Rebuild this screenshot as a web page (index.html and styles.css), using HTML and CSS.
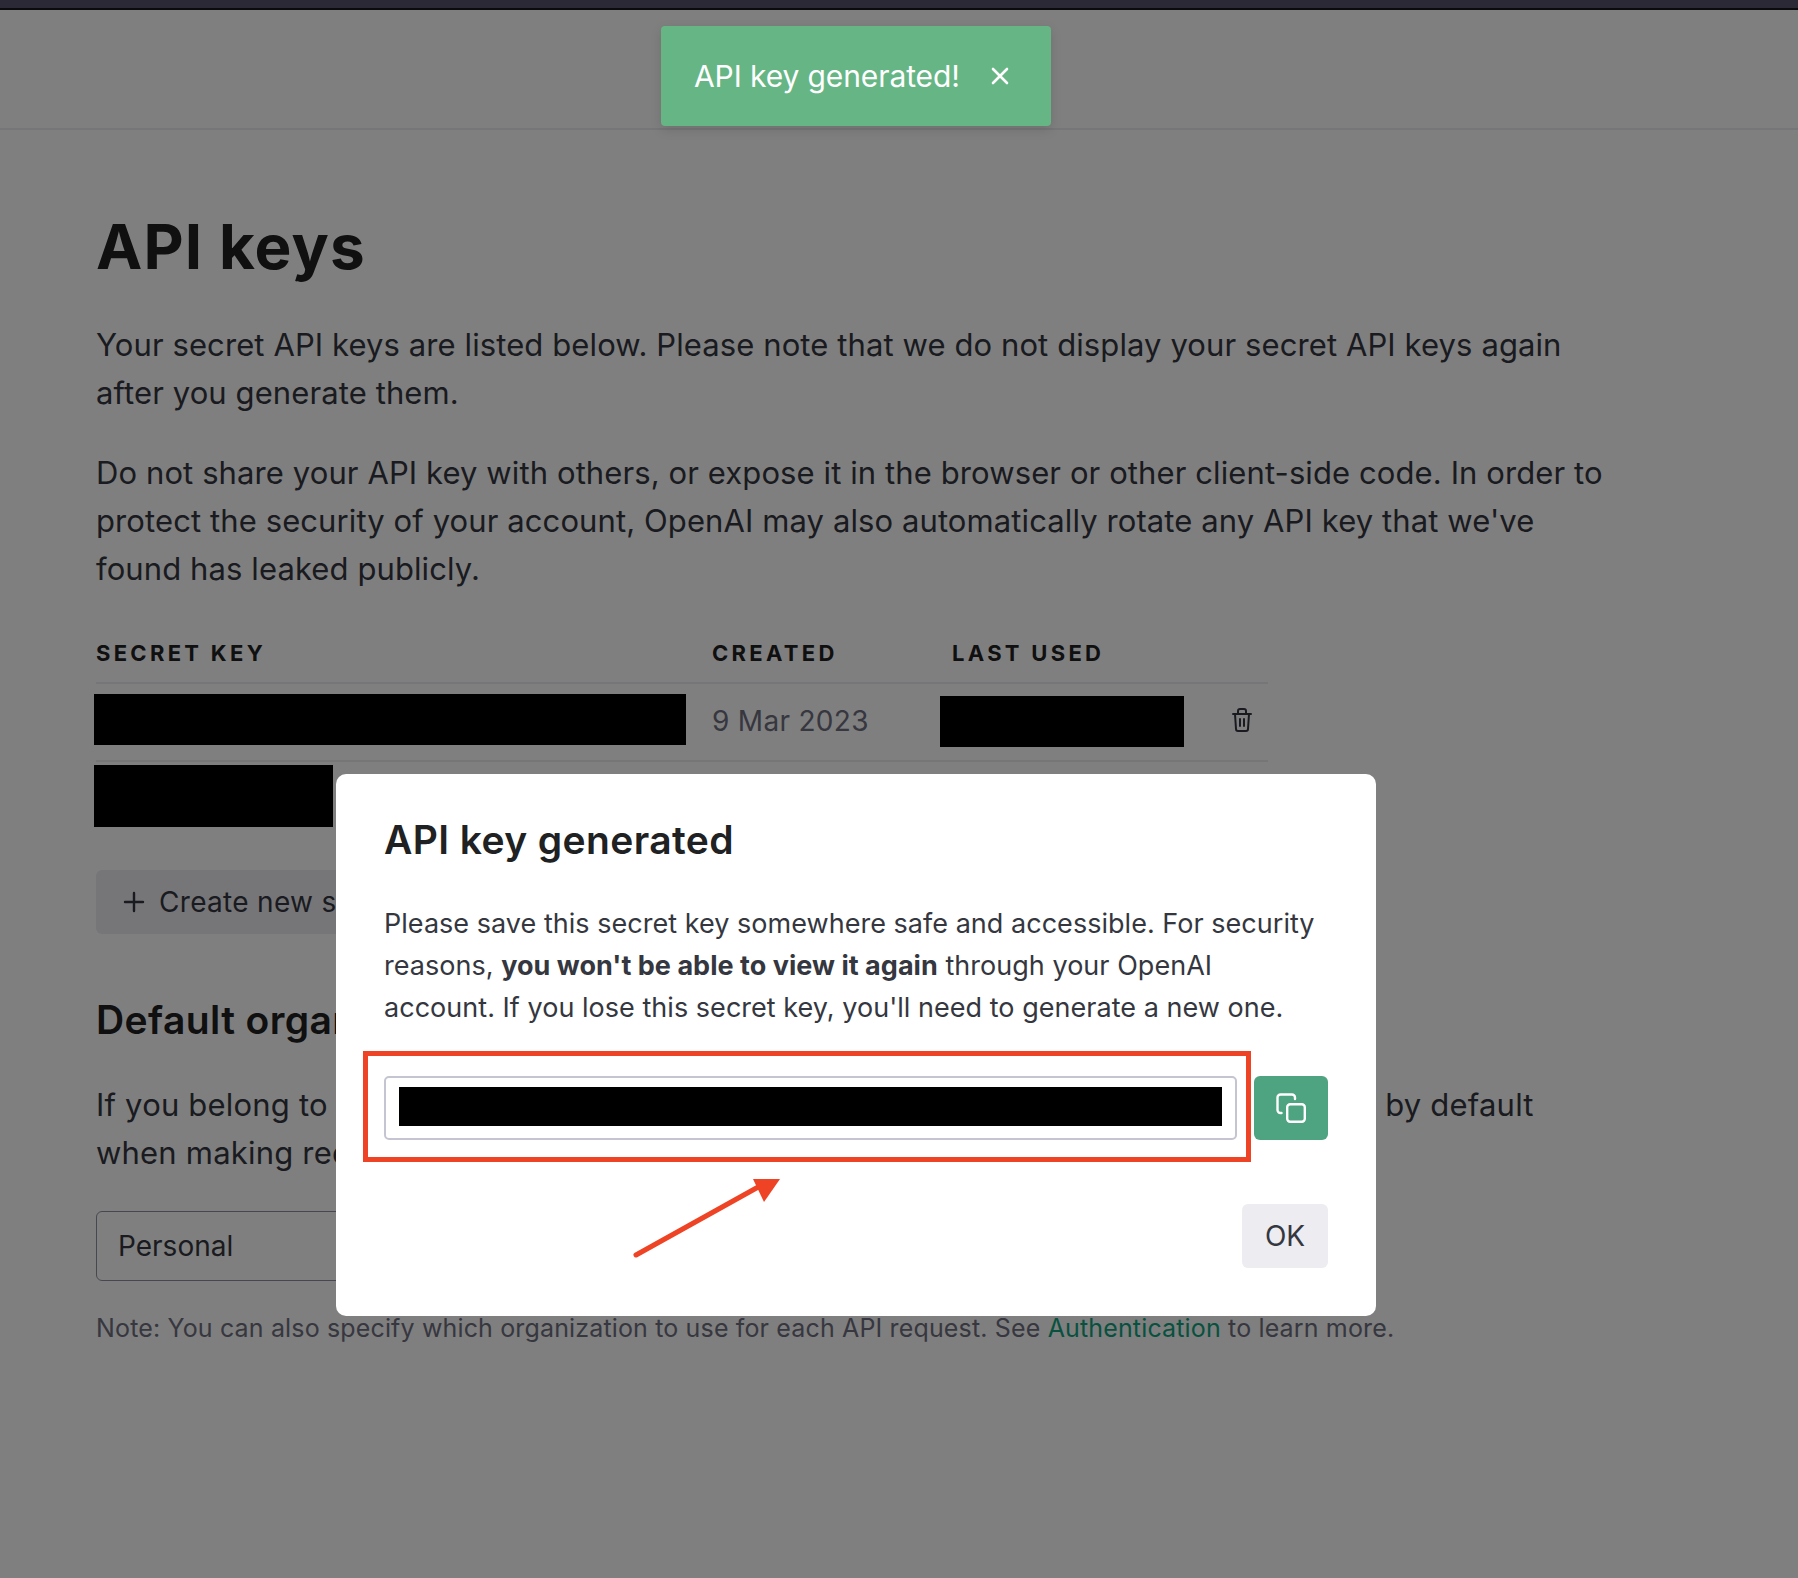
FILE: index.html
```html
<!DOCTYPE html>
<html lang="en">
<head>
  <meta charset="UTF-8">
  <title>API keys</title>
  <link rel="stylesheet" href="styles.css">
</head>
<body>

  <div class="top-bar"></div>
  <div class="page-header"></div>

  <main class="content">
    <h1>API keys</h1>
    <p>Your secret API keys are listed below. Please note that we do not display your secret API keys again after you generate them.</p>
    <p>Do not share your API key with others, or expose it in the browser or other client-side code. In order to protect the security of your account, OpenAI may also automatically rotate any API key that we've found has leaked publicly.</p>

    <div class="keys-table">
      <div class="keys-row keys-head">
        <div>SECRET KEY</div>
        <div>CREATED</div>
        <div>LAST USED</div>
        <div></div>
      </div>
      <div class="keys-row keys-item">
        <div><span class="redact redact-key"></span></div>
        <div class="date">9 Mar 2023</div>
        <div><span class="redact redact-used"></span></div>
        <div class="trash">
          <svg width="20" height="24" viewBox="0 0 20 24" fill="none" stroke="#353740" stroke-width="2" stroke-linecap="round" stroke-linejoin="round">
            <path d="M1 6H19"/>
            <path d="M6 6V3a2 2 0 0 1 2-2h4a2 2 0 0 1 2 2v3"/>
            <path d="M3 6l1 15a2 2 0 0 0 2 2h8a2 2 0 0 0 2-2l1-15"/>
            <path d="M8 11v7M12 11v7"/>
          </svg>
        </div>
      </div>
      <div class="redact redact-more"></div>
    </div>

    <button class="create-btn">
      <svg width="22" height="22" viewBox="0 0 22 22" fill="none" stroke="#353740" stroke-width="2.4" stroke-linecap="round">
        <path d="M11 2V20M2 11H20"/>
      </svg>
      Create new secret key
    </button>

    <h2>Default organization</h2>
    <p class="org-text">If you belong to multiple organizations, this setting controls which organization is used by default when making requests with the API keys above.</p>
    <div class="org-select">Personal</div>
    <p class="note">Note: You can also specify which organization to use for each API request. See <a href="#">Authentication</a> to learn more.</p>
  </main>

  <div class="overlay"></div>

  <div class="toast">
    <span>API key generated!</span>
    <svg width="18" height="18" viewBox="0 0 18 18" fill="none" stroke="#fff" stroke-width="2.6" stroke-linecap="round">
      <path d="M2 2L16 16M16 2L2 16"/>
    </svg>
  </div>

  <div class="modal">
    <h3>API key generated</h3>
    <p>Please save this secret key somewhere safe and accessible. For security reasons, <b>you won't be able to view it again</b> through your OpenAI account. If you lose this secret key, you'll need to generate a new one.</p>
    <div class="key-row">
      <div class="key-input"><span class="redact"></span></div>
      <button class="copy-btn">
        <svg width="30" height="30" viewBox="0 0 30 30" fill="none" stroke="#fff" stroke-width="2.4" stroke-linecap="round" stroke-linejoin="round">
          <rect x="11.2" y="11.2" width="17.6" height="17.6" rx="3"/>
          <path d="M5.5 20H4.5a3 3 0 0 1-3-3V4.5a3 3 0 0 1 3-3H16a3 3 0 0 1 3 3V6"/>
        </svg>
      </button>
      <div class="red-box"></div>
    </div>
    <div class="modal-foot">
      <button class="ok-btn">OK</button>
    </div>
  </div>

  <svg class="arrow" width="160" height="90" viewBox="0 0 160 90">
    <path d="M6 85L130 16" stroke="#ee4324" stroke-width="5" stroke-linecap="round"/>
    <path d="M123 9H150L134 32Z" fill="#ee4324"/>
  </svg>

</body>
</html>
```

FILE: styles.css
```css
body {
  margin: 0;
  height: 1578px;
  position: relative;
  overflow: hidden;
  background: white;
  font-family: Inter, "Noto Sans", sans-serif;
  color: #353740;
  font-size: 31px;
  line-height: 48px;
  letter-spacing: 0.1px;
}
.top-bar {
  height: 8px;
  background: #2a2935;
  border-bottom: 2px solid #0b0b0d;
  position: relative;
  z-index: 3;
}
.page-header {
  height: 118px;
  border-bottom: 2px solid #ececf1;
}
.content {
  padding: 0 96px;
}
h1 {
  margin: 83px 0 40px;
  font-size: 62px;
  line-height: 68px;
  font-weight: 700;
  color: #202123;
  letter-spacing: 1.1px;
}
p {
  margin: 32px 0 0;
  width: 1510px;
}
.keys-table {
  margin-top: 43px;
  width: 1172px;
}
.keys-row {
  display: grid;
  grid-template-columns: 616px 240px 290px 26px;
  border-bottom: 2px solid #ececf1;
}
.keys-head {
  height: 46px;
  font-size: 22px;
  line-height: 34px;
  font-weight: 700;
  letter-spacing: 3.3px;
  color: #202123;
}
.keys-item {
  height: 76px;
  align-items: center;
  font-size: 28px;
  letter-spacing: 0.3px;
}
.date {
  color: #6e6e80;
  margin-bottom: 2px;
}
.redact {
  display: block;
  background: black;
  height: 39px;
}
.redact-key {
  margin: 0 0 6px -2px;
  width: 592px;
  height: 51px;
}
.redact-used {
  margin: 0 0 1px -12px;
  width: 244px;
  height: 51px;
}
.redact-more {
  margin: 3px 0 0 -2px;
  width: 239px;
  height: 62px;
}
.trash {
  display: flex;
  justify-content: flex-end;
  margin: 0 0 4px -40px;
  padding-right: 16px;
}
.create-btn {
  margin-top: 43px;
  width: 440px;
  height: 64px;
  padding: 0 27px;
  display: flex;
  align-items: center;
  gap: 14px;
  border: none;
  border-radius: 6px;
  background: #ececf1;
  font: inherit;
  font-size: 28px;
  letter-spacing: 0.3px;
  white-space: nowrap;
  color: #353740;
}
h2 {
  margin: 61px 0 0;
  font-size: 39px;
  line-height: 50px;
  font-weight: 600;
  color: #202123;
  letter-spacing: 0.4px;
}
.org-text {
  margin-top: 36px;
  letter-spacing: 0.2px;
}
.org-select {
  margin-top: 34px;
  width: 500px;
  height: 70px;
  box-sizing: border-box;
  padding: 0 21px;
  border: 1px solid #8e8ea0;
  border-radius: 6px;
  font-size: 28px;
  letter-spacing: 0;
  line-height: 68px;
}
.note {
  margin-top: 29px;
  font-size: 25px;
  letter-spacing: 0.15px;
  line-height: 36px;
  color: #6e6e80;
  width: auto;
}
.note a {
  color: #10a37f;
  text-decoration: none;
}
.overlay {
  position: absolute;
  inset: 0;
  background: rgba(0,0,0,0.5);
}
.toast {
  position: absolute;
  left: 661px;
  top: 26px;
  width: 390px;
  height: 100px;
  box-sizing: border-box;
  padding: 0 33px;
  display: flex;
  align-items: center;
  gap: 31px;
  background: #66b584;
  border-radius: 4px;
  box-shadow: 0 4px 12px rgba(0,0,0,0.12);
  color: white;
  font-size: 30px;
  letter-spacing: -0.1px;
  white-space: nowrap;
}
.modal {
  position: absolute;
  left: 336px;
  top: 774px;
  width: 1040px;
  height: 542px;
  box-sizing: border-box;
  padding: 37px 48px 0;
  background: white;
  border-radius: 10px;
}
h3 {
  margin: 0;
  font-size: 39px;
  line-height: 58px;
  font-weight: 600;
  color: #202123;
  letter-spacing: 0.4px;
}
.modal p {
  margin: 34px 0 0;
  width: 940px;
  font-size: 27px;
  letter-spacing: 0.03px;
  line-height: 42px;
}
.modal b {
  font-weight: 700;
}
.key-row {
  position: relative;
  margin-top: 47px;
  display: flex;
  gap: 17px;
  height: 64px;
}
.key-input {
  flex: 1;
  box-sizing: border-box;
  padding: 9px 13px 0;
  border: 2px solid #c5c5d2;
  border-radius: 5px;
}
.copy-btn {
  width: 74px;
  padding: 0;
  display: flex;
  align-items: center;
  justify-content: center;
  border: none;
  border-radius: 6px;
  background: #4ea381;
}
.red-box {
  position: absolute;
  left: -21px;
  top: -25px;
  width: 888px;
  height: 111px;
  box-sizing: border-box;
  border: 5px solid #ee4324;
}
.modal-foot {
  margin-top: 64px;
  display: flex;
  justify-content: flex-end;
}
.ok-btn {
  width: 86px;
  height: 64px;
  padding: 0;
  border: none;
  border-radius: 6px;
  background: #ececf1;
  font: inherit;
  font-size: 28px;
  letter-spacing: 0;
  color: #353740;
}
.arrow {
  position: absolute;
  left: 630px;
  top: 1170px;
}
```
